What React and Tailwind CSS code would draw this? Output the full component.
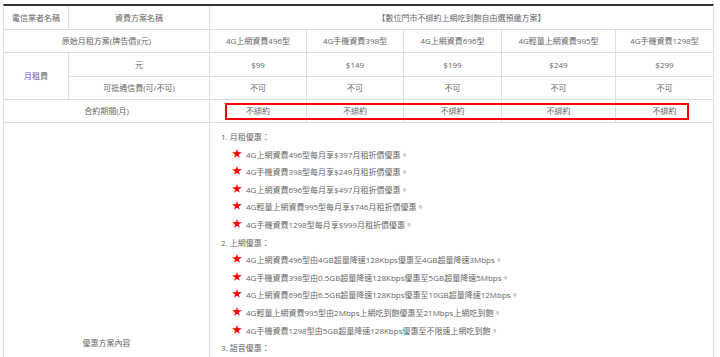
import React from "react";

const font = { fontFamily: '"Open Sans","Noto Sans CJK TC",sans-serif' };

function Cell({ className = "", children }) {
  return (
    <div className={"bg-white flex items-center justify-center text-[#666] " + className}>
      {children}
    </div>
  );
}

function Item({ children }) {
  return (
    <div className="flex items-start h-[17.6px] leading-[17.6px] pl-[11px]">
      <span className="w-[14px] text-[#ff0000] text-[10px] leading-[14px]">★</span>
      <span>{children}</span>
    </div>
  );
}

function Head({ children }) {
  return <div className="h-[17.6px] leading-[17.6px]">{children}</div>;
}

export default function App() {
  const plans = ["4G上網資費496型", "4G手機資費398型", "4G上網資費696型", "4G輕量上網資費995型", "4G手機資費1298型"];
  const prices = ["$99", "$149", "$199", "$249", "$299"];
  return (
    <div className="bg-white w-[720px] min-h-[357px] pt-[4px] pl-[3px] text-[8px]" style={font}>
      <div className="relative w-[711px]">
        <div className="grid grid-cols-[64px_140px_96px_96px_97px_113px_97px] grid-rows-[23px_22px_23px_22px_22px_auto] gap-px bg-[#dddddd] border-t-2 border-t-[#333333] border-x border-b border-x-[#dddddd] border-b-[#dddddd]">
          <Cell>電信業者名稱</Cell>
          <Cell>資費方案名稱</Cell>
          <Cell className="col-span-5">【數位門市不綁約上網吃到飽自由選預繳方案】</Cell>

          <Cell className="col-span-2">原始月租方案(牌告價)(元)</Cell>
          {plans.map((p) => (
            <Cell key={p}>{p}</Cell>
          ))}

          <Cell className="row-span-2">月租費</Cell>
          <Cell>元</Cell>
          {prices.map((p) => (
            <Cell key={p}>{p}</Cell>
          ))}
          <Cell>可抵通信費(可/不可)</Cell>
          {plans.map((p) => (
            <Cell key={p + "k"}>不可</Cell>
          ))}

          <Cell className="col-span-2">合約期間(月)</Cell>
          {plans.map((p) => (
            <Cell key={p + "c"}>不綁約</Cell>
          ))}

          <Cell className="col-span-2">優惠方案內容</Cell>
          <div className="col-span-5 bg-white text-[#666] pt-[5px] pl-[11px] min-h-[439px]">
            <Head>1. 月租優惠：</Head>
            <Item>4G上網資費496型每月享$397月租折價優惠。</Item>
            <Item>4G手機資費398型每月享$249月租折價優惠。</Item>
            <Item>4G上網資費696型每月享$497月租折價優惠。</Item>
            <Item>4G輕量上網資費995型每月享$746月租折價優惠。</Item>
            <Item>4G手機資費1298型每月享$999月租折價優惠。</Item>
            <Head>2. 上網優惠：</Head>
            <Item>4G上網資費496型由4GB超量降速128Kbps優惠至4GB超量降速3Mbps。</Item>
            <Item>4G手機資費398型由0.5GB超量降速128Kbps優惠至5GB超量降速5Mbps。</Item>
            <Item>4G上網資費696型由6.5GB超量降速128Kbps優惠至10GB超量降速12Mbps。</Item>
            <Item>4G輕量上網資費995型由2Mbps上網吃到飽優惠至21Mbps上網吃到飽。</Item>
            <Item>4G手機資費1298型由5GB超量降速128Kbps優惠至不限速上網吃到飽。</Item>
            <Head>3. 語音優惠：</Head>
            <Item>4G手機資費398型網內通話前5分鐘免費。</Item>
            <Item>4G手機資費1298型網內通話免費。</Item>
            <Head>4. 其他說明：</Head>
            <Item>本方案需一次預繳月租費用。</Item>
          </div>
        </div>
        <div className="absolute left-[222px] top-[99px] w-[464px] h-[17px] border-2 border-[#ff0000] pointer-events-none" />
      </div>
    </div>
  );
}
